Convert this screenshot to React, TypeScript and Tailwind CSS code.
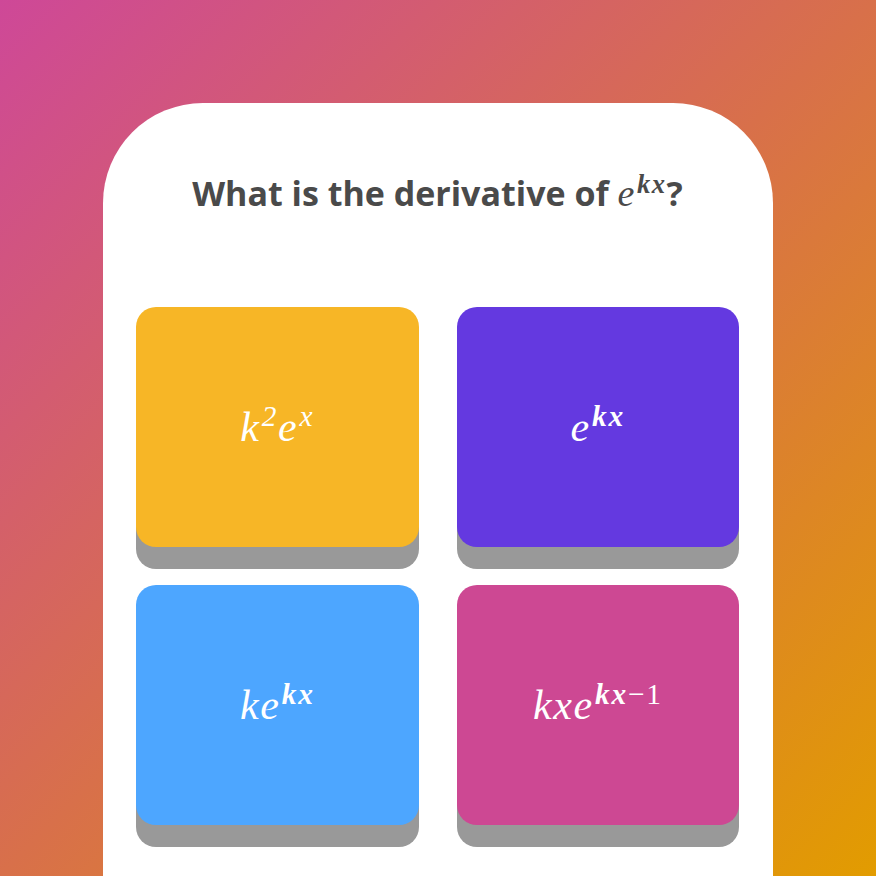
import React from "react";

const M = ({ children, className = "" }: { children: React.ReactNode; className?: string }) => (
  <span className={"italic font-['Liberation_Serif'] tracking-[0.04em] " + className}>{children}</span>
);

const Sup = ({ children, bold = false }: { children: React.ReactNode; bold?: boolean }) => (
  <span
    className={
      "text-[0.7em] relative -top-[0.5em] ml-[0.04em] align-baseline leading-none " +
      (bold ? "font-semibold" : "font-normal")
    }
  >
    {children}
  </span>
);

function Option({ color, children }: { color: string; children: React.ReactNode }) {
  return (
    <button
      className={
        "h-[240px] rounded-[20px] flex items-center justify-center text-white text-[42px] shadow-[0_22px_0_#999999] " +
        color
      }
    >
      {children}
    </button>
  );
}

export default function App() {
  return (
    <div className="w-[876px] h-[876px] overflow-hidden bg-[linear-gradient(to_bottom_right,#ce4898_0%,#d8704a_50%,#e29c00_100%)] pt-[103px] px-[103px]">
      <div className="bg-white rounded-t-[100px] h-[800px] pl-[33px] pr-[34px]">
        <h1 className="pt-[66px] text-center text-[34px] leading-[48px] font-bold text-[#4a4a4a] font-['Open_Sans']">
          What is the derivative of{" "}
          <M className="font-normal text-[38px]">
            e<Sup bold>kx</Sup>
          </M>
          ?
        </h1>
        <div className="mt-[90px] grid grid-cols-2 gap-x-[38px] gap-y-[38px]">
          <Option color="bg-[#f7b626]">
            <M>
              k<Sup>2</Sup>e<Sup>x</Sup>
            </M>
          </Option>
          <Option color="bg-[#6439e0]">
            <M>
              e<Sup bold>kx</Sup>
            </M>
          </Option>
          <Option color="bg-[#4da6ff]">
            <M>
              ke<Sup bold>kx</Sup>
            </M>
          </Option>
          <Option color="bg-[#cd4893]">
            <M>
              kxe
              <Sup>
                <span className="font-semibold">kx</span>
                <span className="not-italic">−1</span>
              </Sup>
            </M>
          </Option>
        </div>
      </div>
    </div>
  );
}
